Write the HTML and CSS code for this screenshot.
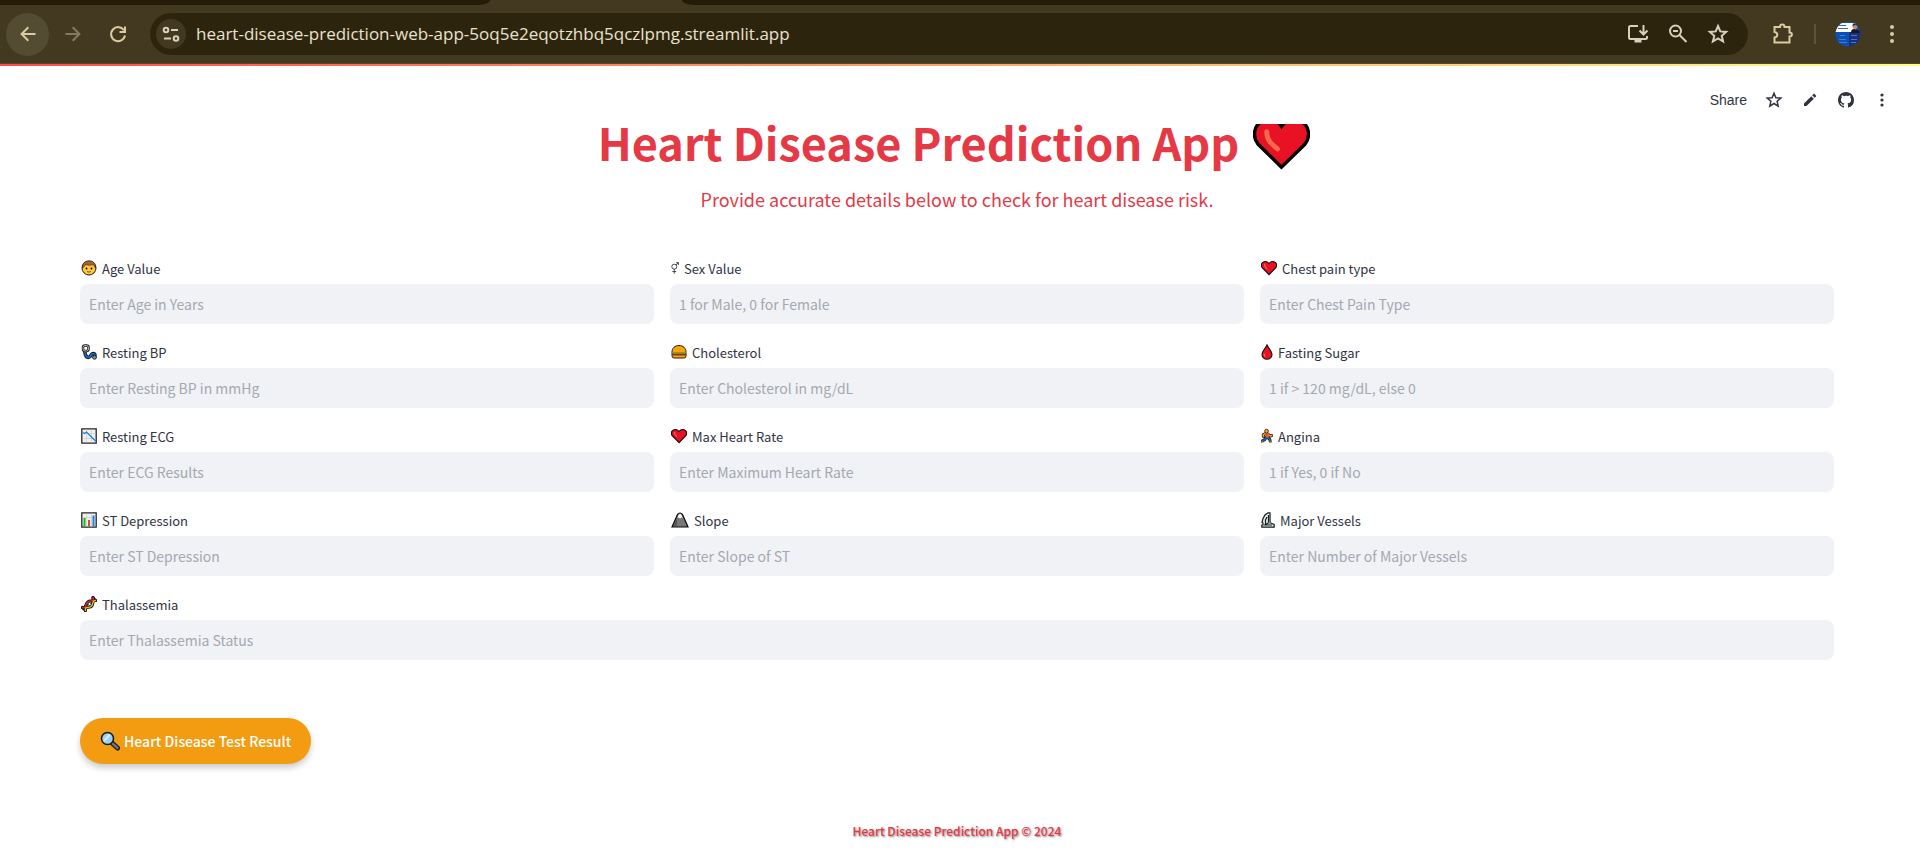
FILE: index.html
```html
<!DOCTYPE html>
<html lang="en">
<head>
<meta charset="utf-8">
<title>Heart Disease Prediction App</title>
<link rel="stylesheet" href="styles.css">
</head>
<body>
<svg class="defs" aria-hidden="true">
  <symbol id="heart" viewBox="0 0 16 16"><path d="M8 14.6 1.4 8C-.4 5.500.3 2.700 2.500 1.900 4.600 1.100 6.700 1.900 8 3.500 9.300 1.900 11.400 1.100 13.500 1.900c2.200.8 2.900 3.600 1.100 6.100z" fill="#e81224" stroke="#15080a" stroke-width="1.100"/><path d="M3.600 4.300c-.5 1.500.6 2.600 2 4" fill="none" stroke="#f4694d" stroke-width="1.200" stroke-linecap="round"/></symbol>
</svg>

<div class="browser">
  <div class="tabs"><span class="tab-left"></span><span class="tab-right"></span></div>
  <div class="toolbar">
    <nav class="nav">
      <button class="round lit" aria-label="Back"><svg width="20" height="20" viewBox="0 0 20 20"><path d="M17.500 10H4M10.300 3.300 3.600 10l6.700 6.700"/></svg></button>
      <button class="round dim" aria-label="Forward"><svg width="20" height="20" viewBox="0 0 20 20"><path d="M2.500 10H16M9.700 3.300l6.700 6.700-6.700 6.700"/></svg></button>
      <button class="round" aria-label="Reload"><svg width="20" height="20" viewBox="0 0 20 20"><path d="M16 6.300A7 7 0 1 0 17 11.500M17 2.500V8h-5.500" /></svg></button>
    </nav>
    <div class="address">
      <button class="site" aria-label="Site information"><svg width="18" height="18" viewBox="0 0 18 18"><circle cx="4" cy="5" r="2.300"/><path d="M9 5h7M2 13.500h7"/><circle cx="14" cy="13.500" r="2.300"/></svg></button>
      <input class="url" aria-label="Address" value="heart-disease-prediction-web-app-5oq5e2eqotzhbq5qczlpmg.streamlit.app">
      <div class="actions">
        <button aria-label="Install app"><svg width="22" height="22" viewBox="0 0 22 22"><path d="M11 3H3.500Q2 3 2 4.500v10Q2 16 3.500 16h15q1.500 0 1.500-1.500V13M16.500 2v9M12.500 7.500l4 4 4-4"/><path d="M7.500 18h7" stroke-width="3"/></svg></button>
        <button aria-label="Zoom out"><svg width="22" height="22" viewBox="0 0 22 22"><circle cx="8.500" cy="8" r="5.500"/><path d="M6 8h5M12.500 12l7 7"/></svg></button>
        <button aria-label="Bookmark"><svg width="22" height="22" viewBox="0 0 22 22"><path d="m11 3 2.300 5.400 5.900.5-4.500 3.900 1.400 5.700-5.100-3-5.100 3 1.400-5.700-4.500-3.900 5.900-.5z"/></svg></button>
      </div>
    </div>
    <div class="chrome-end">
      <button aria-label="Extensions"><svg width="24" height="24" viewBox="0 0 24 24"><path d="M3.500 5H9c0-3.200 4.500-3.200 4.500 0h5v5.500c3.200 0 3.200 4 0 4v6h-15v-5c3.700-.6 3.700-5 0-5.500z"/></svg></button>
      <span class="divider"></span>
      <button class="avatar" aria-label="Profile"><svg width="26" height="26" viewBox="0 0 26 26"><clipPath id="av"><circle cx="13" cy="13" r="12.500"/></clipPath><g clip-path="url(#av)" stroke="none"><path fill="#0b50b4" d="M0 0h26v26H0z"/><path fill="#1d2d77" d="M14 9h12v17H14z"/><path fill="#fff" d="M0 2h21v9H0z"/><path fill="#16191f" d="M16 12c0-3 1-4 3-4s5 1 6 4z"/><circle cx="20" cy="5.500" r="2.500" fill="#b78c75"/><path fill="#1d315c" d="M17.500 5C17 1 23 1 22.500 5l-2-1z"/><path fill="#3265bd" d="M3 4h8v1H3zM3 7h10v1H3z"/><path fill="#3f7bd0" d="M5 14h5v1H5zM4 18h7v1H4zM4 21h8v1H4zM16 14h6v1h-6zM16 18h6v1h-6zM16 21h5v1h-5z"/></g></svg></button>
      <button aria-label="Browser menu"><svg width="24" height="24" viewBox="0 0 24 24"><g class="solid"><circle cx="12" cy="5" r="2"/><circle cx="12" cy="12" r="2"/><circle cx="12" cy="19" r="2"/></g></svg></button>
    </div>
  </div>
</div>

<header class="app-header">
  <button class="share">Share</button>
  <button aria-label="Favorite"><svg width="18" height="18" viewBox="0 0 18 18"><path d="m9 2.200 1.900 4.500 4.900.4-3.700 3.200 1.100 4.800L9 12.500l-4.200 2.600 1.100-4.800-3.700-3.200 4.900-.4z" fill="none" stroke="currentColor" stroke-width="1.500"/></svg></button>
  <button aria-label="Edit"><svg width="18" height="18" viewBox="0 0 18 18"><path d="M3 12.500V15h2.500l7.300-7.300-2.500-2.500zM11.200 4.300l2.500 2.500 1.300-1.300c.3-.3.300-.7 0-1L13.500 3c-.3-.3-.7-.3-1 0z" fill="currentColor"/></svg></button>
  <a href="#" aria-label="GitHub"><svg width="16" height="16" viewBox="0 0 16 16"><path fill="currentColor" d="M8 0C3.580 0 0 3.580 0 8c0 3.540 2.290 6.530 5.470 7.590.4.070.55-.17.55-.38 0-.19-.01-.82-.01-1.490-2.010.37-2.530-.49-2.690-.94-.09-.23-.48-.94-.82-1.130-.28-.15-.68-.52-.01-.53.63-.01 1.080.58 1.230.82.72 1.210 1.870.87 2.330.66.070-.52.28-.87.51-1.070-1.780-.2-3.640-.89-3.640-3.950 0-.87.31-1.590.82-2.150-.08-.2-.36-1.020.08-2.120 0 0 .67-.21 2.200.82A7.600 7.600 0 0 1 8 3.870c.68 0 1.360.09 2 .27 1.530-1.040 2.200-.82 2.200-.82.44 1.100.16 1.920.08 2.120.51.56.82 1.270.82 2.150 0 3.070-1.870 3.750-3.650 3.950.29.25.54.73.54 1.480 0 1.070-.01 1.930-.01 2.200 0 .21.15.46.55.38A8.010 8.010 0 0 0 16 8c0-4.420-3.580-8-8-8z"/></svg></a>
  <button aria-label="Main menu"><svg width="18" height="18" viewBox="0 0 18 18"><g fill="currentColor"><circle cx="9" cy="4" r="1.600"/><circle cx="9" cy="9" r="1.600"/><circle cx="9" cy="14" r="1.600"/></g></svg></button>
</header>

<main class="page">
  <h1 class="title">Heart Disease Prediction App <svg class="title-heart" width="57" height="46" viewBox="0 0 58 46" aria-hidden="true"><path d="M29 43.500 5 20C-1 12 1 1 9-3c8-4 16-1 20 5C33-4 41-7 49-3c8 4 10 15 4 23z" fill="#e81224" stroke="#050203" stroke-width="3.500"/><path d="M14 7.500c0 8 3 11 11 17.500" fill="none" stroke="#f4694d" stroke-width="5" stroke-linecap="round"/></svg></h1>
  <p class="subtitle">Provide accurate details below to check for heart disease risk.</p>

  <form class="form">
    <div class="field">
      <label for="age"><svg class="icon" viewBox="0 0 16 16"><circle cx="8" cy="8" r="7" fill="#ffc83d" stroke="#24190f"/><path d="M1.500 8C1 2 5 1 8 1s7 1 6.500 7c-1-1-1.500-2-2-3.500C9 6 6 5 4.500 4.500 4 6 3 7 1.500 8z" fill="#a56239" stroke="#24190f" stroke-width=".5"/><circle cx="5.500" cy="8.500" r=".9"/><circle cx="10.500" cy="8.500" r=".9"/><path d="M6 11.500q2 1.200 4 0" fill="none" stroke="#8a5a18"/></svg>Age Value</label>
      <input id="age" placeholder="Enter Age in Years">
    </div>
    <div class="field">
      <label for="sex"><svg class="icon thin" viewBox="0 0 9 14"><g fill="none" stroke="#31333f"><circle cx="3.700" cy="5.500" r="2.800"/><path d="M3.700 8.300v5M1.500 11h4.400M5.700 3.500 8.300 1M5.700 1h2.600v2.700"/></g></svg>Sex Value</label>
      <input id="sex" placeholder="1 for Male, 0 for Female">
    </div>
    <div class="field">
      <label for="chest"><svg class="icon"><use href="#heart"/></svg>Chest pain type</label>
      <input id="chest" placeholder="Enter Chest Pain Type">
    </div>
    <div class="field">
      <label for="bp"><svg class="icon" viewBox="0 0 16 16"><g fill="none"><path d="M4 6.500c-.5 3.500 1 7 3.500 7s2-4 4.500-4 2 2 1.500 4" stroke="#10151b" stroke-width="3.600"/><path d="M4 6.500c-.5 3.500 1 7 3.500 7s2-4 4.500-4 2 2 1.500 4" stroke="#1671c4" stroke-width="1.700"/><rect x="2" y="1.500" width="5.500" height="5.500" rx="2" stroke="#17191c" stroke-width="2.500"/><rect x="2" y="1.500" width="5.500" height="5.500" rx="2" stroke="#b4b7ba"/></g><circle cx="13.500" cy="13.300" r="1.900" fill="#8b8e91" stroke="#202020"/></svg>Resting BP</label>
      <input id="bp" placeholder="Enter Resting BP in mmHg">
    </div>
    <div class="field">
      <label for="chol"><svg class="icon" viewBox="0 0 16 16"><path d="M1 8C1 4 4 1.500 8 1.500S15 4 15 8v4q0 2-2 2H3q-2 0-2-2z" fill="#f3a406" stroke="#2c1d12"/><path d="M1 8.500h14" stroke="#7aa11c"/><path d="M1 10.500h14" stroke="#7a3d23" stroke-width="2"/></svg>Cholesterol</label>
      <input id="chol" placeholder="Enter Cholesterol in mg/dL">
    </div>
    <div class="field">
      <label for="sugar"><svg class="icon narrow" viewBox="0 0 12 16"><path d="M6 1C4.500 4.500 1 7 1 10.500a5 4.700 0 0 0 10 0C11 7 7.500 4.500 6 1z" fill="#e81224" stroke="#170a0b" stroke-width="1.100"/><path d="M3 9.500q0 2 1.500 3" fill="none" stroke="#f4694d" stroke-width="1.200"/></svg>Fasting Sugar</label>
      <input id="sugar" placeholder="1 if &gt; 120 mg/dL, else 0">
    </div>
    <div class="field">
      <label for="ecg"><svg class="icon" viewBox="0 0 16 16"><path d="M.8.8h14.400v14.400H.8z" fill="#f0f0f0" stroke="#252525" stroke-width="1.300"/><path d="M5.500 1.500v13M10.500 1.500v13M1.500 5.500h13M1.500 10.500h13" stroke="#ccc" stroke-width=".7"/><path d="m1.500 4.500 2 1 2-1.500L14.500 13" fill="none" stroke="#1683dc" stroke-width="1.300"/></svg>Resting ECG</label>
      <input id="ecg" placeholder="Enter ECG Results">
    </div>
    <div class="field">
      <label for="rate"><svg class="icon"><use href="#heart"/></svg>Max Heart Rate</label>
      <input id="rate" placeholder="Enter Maximum Heart Rate">
    </div>
    <div class="field">
      <label for="angina"><svg class="icon narrow" viewBox="0 0 13 16"><g fill="none" stroke-linecap="round" stroke-linejoin="round"><path d="M6 5 2.500 6.500v2M7.500 6l2.500 2 1.500-.5M6 9l-2 3-3 1.500M7.500 10l2 1.500.5 2.500" stroke="#241811" stroke-width="3.200"/><path d="M6 5 2.500 6.500v2M7.500 6l2.500 2 1.500-.5" stroke="#f7a024" stroke-width="1.700"/><path d="M6 9l-2 3-3 1.500M7.500 10l2 1.500.5 2.500" stroke="#086bc8" stroke-width="1.800"/></g><path d="M5 4h3l1 5.500H5z" fill="#e9562c"/><circle cx="6" cy="2.700" r="2" fill="#f4a329" stroke="#50301b"/><path d="M.5 14.500h2M9 14.800h3" stroke="#f7a024" stroke-width="1.300"/></svg>Angina</label>
      <input id="angina" placeholder="1 if Yes, 0 if No">
    </div>
    <div class="field">
      <label for="st"><svg class="icon" viewBox="0 0 16 16"><path d="M.8.8h14.400v14.400H.8z" fill="#efefef" stroke="#252525" stroke-width="1.300"/><path d="M5.500 1.500v13M10.500 1.500v13M1.500 5.500h13" stroke="#ccc" stroke-width=".7"/><path d="M3.500 14.500V6" stroke="#10bd20" stroke-width="2"/><path d="M8 14.500V8" stroke="#e4492c" stroke-width="2"/><path d="M12.500 14.500V3.500" stroke="#1683dc" stroke-width="2"/></svg>ST Depression</label>
      <input id="st" placeholder="Enter ST Depression">
    </div>
    <div class="field">
      <label for="slope"><svg class="icon wide" viewBox="0 0 18 16"><path d="M1 15 6.500 2.500Q7.500 1 9 1t2.500 1.500L17 15z" fill="#777" stroke="#080808" stroke-width="1.200"/><path d="M6.300 6 7.500 3q1.500-1.800 3 0l1.200 3-1.500-.5L9 6.500l-1.200-1z" fill="#fff"/><path d="m6.300 6-3.800 8.300h3z" fill="#505050"/></svg>Slope</label>
      <input id="slope" placeholder="Enter Slope of ST">
    </div>
    <div class="field">
      <label for="vessels"><svg class="icon medium" viewBox="0 0 14 16"><path d="M.8 15.200V13H2v-2L1 10.500l1-4L4 3l3-2.200h2V8.500L9.500 11l3.700 1.500v2.700z" fill="#e9eaeb" stroke="#171b1c" stroke-width="1.200"/><path d="M7.500 3v8l-3 1.500V8L6 5M3 13h8" fill="none" stroke="#171b1c" stroke-width="1.200"/><path d="M7.500 11h3" stroke="#5c9ba7" stroke-width="1.400"/></svg>Major Vessels</label>
      <input id="vessels" placeholder="Enter Number of Major Vessels">
    </div>
    <div class="field full">
      <label for="thal"><svg class="icon" viewBox="0 0 16 16"><g fill="none" stroke-linecap="round"><path d="M1.500 11.500C6 13.500 3.500 5 9.500 5c3 0 3-1.500 2.500-3.500M4.500 14.500c-.5-4 1.500-3 4.500-3.500C13.500 10 10 4 14.500 4.500" stroke="#17120d" stroke-width="3.200"/><path d="m2 12 2 2M12 2l2.500 2.500" stroke="#17120d" stroke-width="3"/><path d="M1.500 11.500C6 13.500 3.500 5 9.500 5c3 0 3-1.500 2.500-3.500" stroke="#d52532" stroke-width="1.500"/><path d="M4.500 14.500c-.5-4 1.500-3 4.500-3.500C13.500 10 10 4 14.500 4.500" stroke="#d8b92c" stroke-width="1.500"/><path d="m6.500 7.500 2.500 2.500M8.500 6.500l1.500 1.500" stroke="#386b91"/></g></svg>Thalassemia</label>
      <input id="thal" placeholder="Enter Thalassemia Status">
    </div>
    <button class="submit" type="button"><svg width="20" height="20" viewBox="0 0 20 20" aria-hidden="true"><path d="m11.500 11.500 6 5.500" stroke="#171717" stroke-width="5" stroke-linecap="round"/><path d="m12 12 5.500 5" stroke="#747474" stroke-width="2.400" stroke-linecap="round"/><circle cx="7.500" cy="7.500" r="6" fill="#9bd2f4" stroke="#171717" stroke-width="1.500"/><path d="m4 10 6-6.500" stroke="#d9f0fc" stroke-width="2"/></svg>Heart Disease Test Result</button>
  </form>
  <footer class="footer">Heart Disease Prediction App © 2024</footer>
</main>
</body>
</html>
```
FILE: styles.css
```css
* { box-sizing: border-box; }

body {
  margin: 0;
  background: #fff;
  color: #31333f;
  font-family: "Noto Sans CJK SC", "Open Sans", sans-serif;
}

button {
  display: flex;
  align-items: center;
  justify-content: center;
  padding: 0;
  border: 0;
  background: none;
  color: inherit;
  font: inherit;
}

svg { display: block; flex: none; }
.defs { display: none; }

/* Browser bar */
.browser { background: #433920; }

.tabs {
  display: flex;
  gap: 192px;
  height: 5px;
}

.tab-left,
.tab-right { background: #241c08; }
.tab-left { width: 490px; border-bottom-right-radius: 12px 5px; }
.tab-right { flex: 1; border-bottom-left-radius: 12px 5px; }

.toolbar {
  display: flex;
  align-items: center;
  height: 59px;
  padding: 0 16px 0 6px;
  border-bottom: 1px solid #50473a;
  color: #d9cba2;
}

.toolbar svg {
  fill: none;
  stroke: currentColor;
  stroke-width: 2;
}
.toolbar .solid { fill: currentColor; stroke: none; }

.nav { display: flex; gap: 2px; margin-right: 11px; }
.round { width: 43px; height: 43px; border-radius: 50%; }
.lit { background: #544b33; }
.dim { color: #857a5e; }

.address {
  display: flex;
  flex: 1;
  align-items: center;
  height: 42px;
  padding: 0 19px 0 6px;
  border-radius: 21px;
  background: #2d240e;
  color: #d8cfbd;
}

.site {
  width: 30px;
  height: 30px;
  border-radius: 50%;
  background: #433920;
}

.url {
  flex: 1;
  min-width: 0;
  padding: 0 0 0 10px;
  border: 0;
  outline: 0;
  background: none;
  color: #e9e2cf;
  font: 17px/24px "Open Sans", "Noto Sans", sans-serif;
}

.actions { display: flex; gap: 18px; }

.chrome-end {
  display: flex;
  align-items: center;
  gap: 19px;
  margin-left: 23px;
}
.divider { width: 2px; height: 20px; background: #5d5338; }

/* App header */
.app-header {
  display: flex;
  align-items: center;
  justify-content: flex-end;
  gap: 18px;
  height: 60px;
  padding: 10px 29px 0 0;
  border-top: 2px solid;
  border-image: linear-gradient(90deg, #ff4b4b, #fffd80) 1;
}
.share { font: 14px/20px "Liberation Sans", Arial, sans-serif; }
.app-header a { padding: 0 1px; color: inherit; }

/* Page */
.page { padding: 0 86px 20px 80px; }

.title {
  display: flex;
  justify-content: center;
  gap: 14px;
  margin: 0;
  padding-right: 6px;
  color: #e63946;
  font-size: 45px;
  font-weight: 700;
  line-height: 36px;
}

.subtitle {
  margin: 15px 0 43px;
  color: #e63946;
  font-size: 18px;
  line-height: 28px;
  text-align: center;
}

.form {
  display: grid;
  grid-template-columns: repeat(3, 1fr);
  gap: 16px;
}

.field label {
  display: flex;
  align-items: center;
  gap: 5px;
  height: 24px;
  margin-bottom: 4px;
  padding-left: 1px;
  font-size: 13px;
}

.icon { width: 16px; height: 16px; }
.narrow { width: 12px; }
.medium { width: 14px; }
.wide { width: 18px; }
.thin { width: 8px; height: 14px; }

.field input {
  display: block;
  width: 100%;
  height: 40px;
  padding: 0 9px;
  border: 0;
  border-radius: 8px;
  background: #f0f2f6;
  color: #31333f;
  font: 14px/24px "Noto Sans CJK SC", "Open Sans", sans-serif;
}
.field input::placeholder { color: #a6a8b0; opacity: 1; }
.full { grid-column: 1 / -1; }

.submit {
  justify-self: start;
  gap: 4px;
  height: 46px;
  margin-top: 42px;
  padding: 0 20px;
  border-radius: 23px;
  background: #f39c12;
  box-shadow: 0 4px 6px rgba(0, 0, 0, 0.2);
  color: #fff;
  font-size: 14px;
  font-weight: 500;
}

.footer {
  margin-top: 55px;
  color: #e63946;
  font-size: 12px;
  font-weight: 500;
  line-height: 24px;
  text-align: center;
  text-shadow: 1px 1px 2px rgba(0, 0, 0, 0.5);
}
```
